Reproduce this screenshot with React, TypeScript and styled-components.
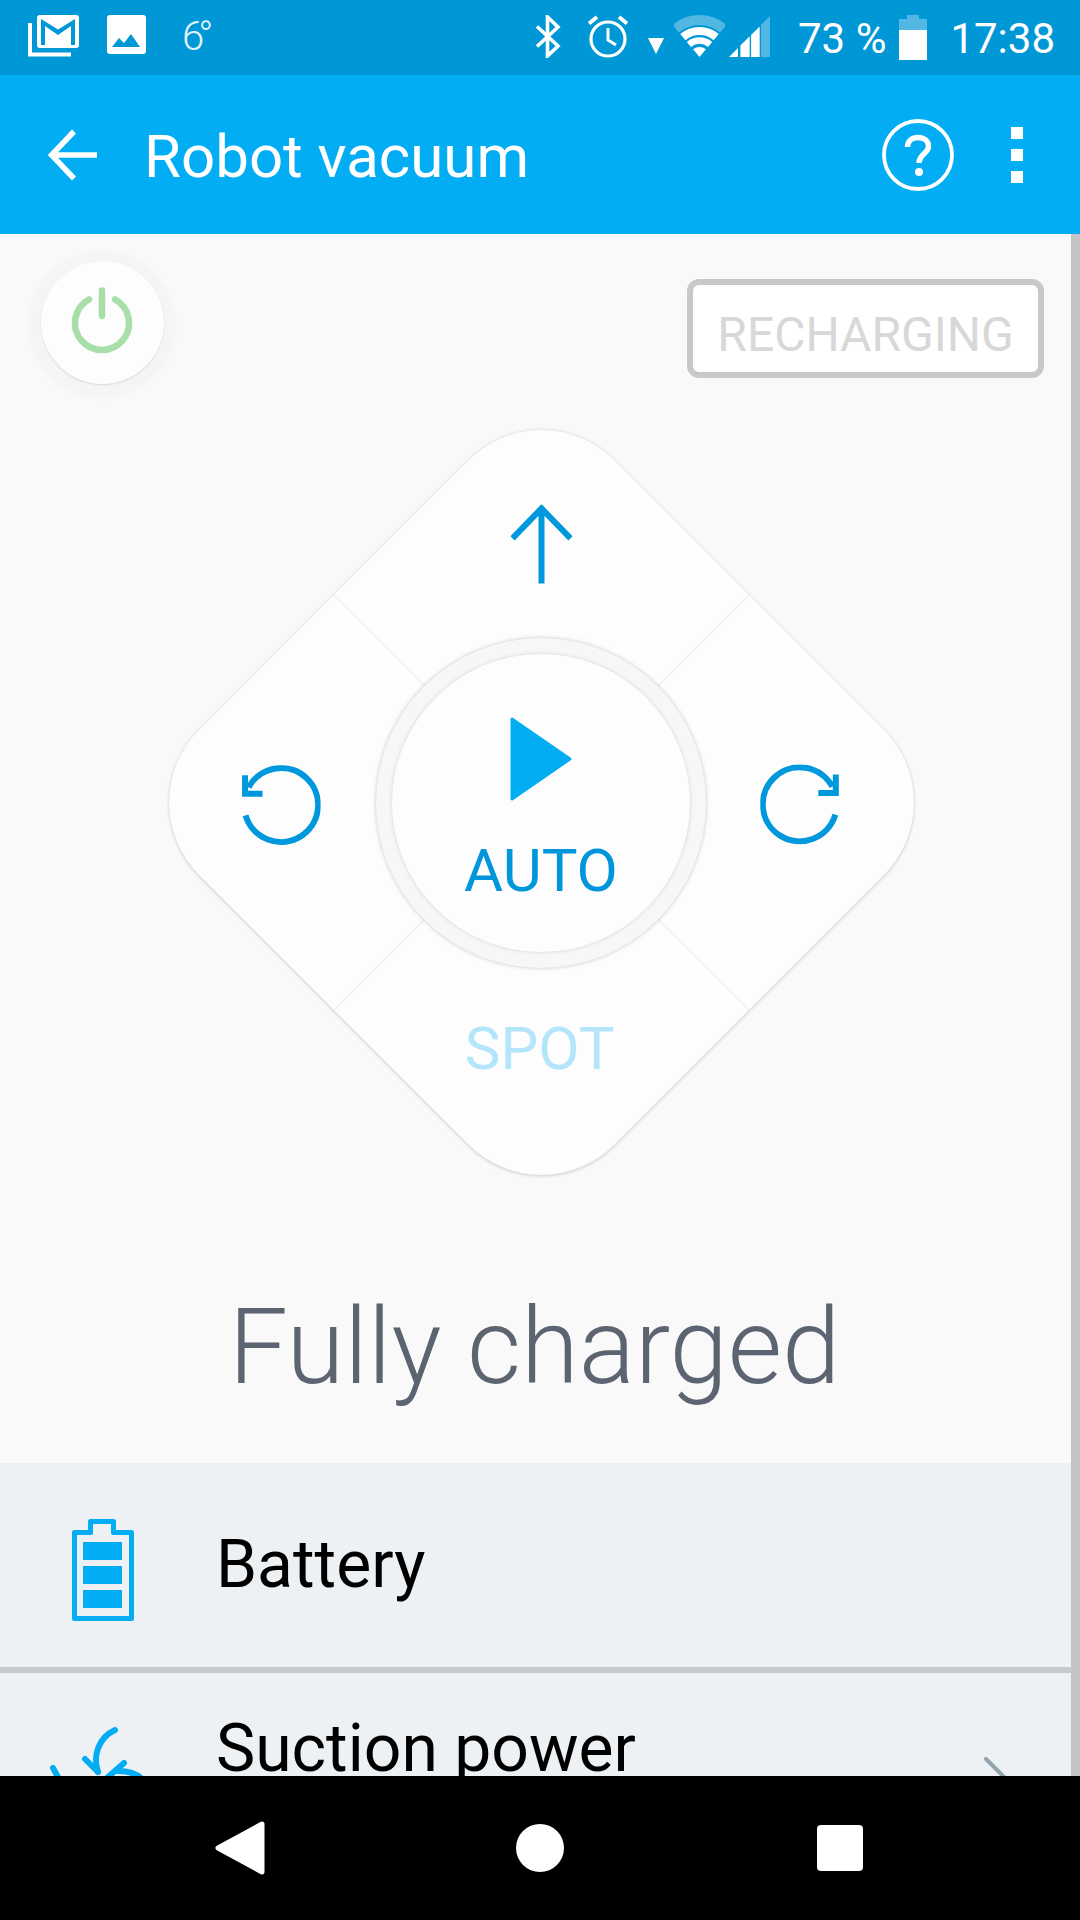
import { createGlobalStyle, styled } from 'styled-components';

const GlobalStyle = createGlobalStyle`
  html, body {
    margin: 0;
    padding: 0;
    background: #f9f9f9;
  }
  body {
    font-family: Roboto, 'Liberation Sans', sans-serif;
  }
`;

const App = () => {
  return (
    <>
      <GlobalStyle />
      <Screen>
        <StatusBar>
          <StatusGroup>
            <StatusSlot $left={0} $top={-1}>
              <GmailIcon />
            </StatusSlot>
            <StatusSlot $left={26}>
              <PictureIcon />
            </StatusSlot>
            <Weather>6°</Weather>
          </StatusGroup>
          <StatusGroup>
            <StatusSlot $left={0}>
              <BluetoothIcon />
            </StatusSlot>
            <StatusSlot $left={26}>
              <AlarmIcon />
            </StatusSlot>
            <StatusSlot $left={19} $top={23}>
              <DataIcon />
            </StatusSlot>
            <StatusSlot $left={10}>
              <WifiIcon />
            </StatusSlot>
            <StatusSlot $left={4}>
              <SignalIcon />
            </StatusSlot>
            <Percent>73 %</Percent>
            <StatusSlot $left={13}>
              <PhoneBatteryIcon />
            </StatusSlot>
            <Clock>17:38</Clock>
          </StatusGroup>
        </StatusBar>
        <AppBar>
          <BackIcon />
          <Title>Robot vacuum</Title>
          <HelpIcon />
          <Dots>
            <Dot />
            <Dot />
            <Dot />
          </Dots>
        </AppBar>
        <Body>
          <TopRow>
            <PowerHalo>
              <PowerButton>
                <PowerIcon />
              </PowerButton>
            </PowerHalo>
            <Recharge>RECHARGING</Recharge>
          </TopRow>
          <PadArea>
            <Diamond>
              <Sector $place="top">
                <Upright>
                  <UpArrow />
                </Upright>
              </Sector>
              <Sector $place="right">
                <Upright>
                  <RotateIcon $flip />
                </Upright>
              </Sector>
              <Sector $place="left">
                <Upright>
                  <RotateIcon />
                </Upright>
              </Sector>
              <Sector $place="bottom">
                <Upright>
                  <SpotLabel>SPOT</SpotLabel>
                </Upright>
              </Sector>
            </Diamond>
            <HubRing>
              <Hub>
                <PlayIcon />
                <AutoLabel>AUTO</AutoLabel>
              </Hub>
            </HubRing>
          </PadArea>
          <Status>Fully charged</Status>
          <Row>
            <RowIcon $inset={72} $top={10}>
              <BatteryIcon />
            </RowIcon>
            <RowLabel>Battery</RowLabel>
          </Row>
          <Divider />
          <Row $tall>
            <RowIcon $inset={30} $top={8}>
              <SuctionIcon />
            </RowIcon>
            <RowLabel>Suction power</RowLabel>
            <Chevron />
          </Row>
          <Scrollbar />
        </Body>
        <NavBar>
          <NavCell>
            <NavBack />
          </NavCell>
          <NavCell>
            <NavHome />
          </NavCell>
          <NavCell>
            <NavSquare />
          </NavCell>
        </NavBar>
      </Screen>
    </>
  );
};

export default App;

const GmailIcon = () => (
  <svg width="54" height="44" viewBox="0 0 54 44">
    <path d="M3 9V40.5H44" fill="none" stroke="#fff" strokeWidth="4" />
    <rect x="10" y="1" width="42" height="33" rx="3" fill="#fff" />
    <path d="M14 5L31 15.5L48 5V31H44V12L31 21L18 12V31H14Z" fill="#0097d6" />
  </svg>
);

const PictureIcon = () => (
  <svg width="39" height="39" viewBox="0 0 39 39">
    <rect width="39" height="39" rx="3" fill="#fff" />
    <path d="M5 32L12 23L17 28L24 19L33 32Z" fill="#0097d6" />
  </svg>
);

const BluetoothIcon = () => (
  <svg width="26" height="43" viewBox="0 0 26 43">
    <path d="M2 11.5L23 31L12.5 41V2L23 12L2 31.5" fill="none" stroke="#fff" strokeWidth="3.6" />
  </svg>
);

const AlarmIcon = () => (
  <svg width="42" height="43" viewBox="0 0 42 43">
    <circle cx="21" cy="24" r="17" fill="none" stroke="#fff" strokeWidth="3.2" />
    <path d="M21 13V25L29 30" fill="none" stroke="#fff" strokeWidth="3" />
    <path d="M10 2L2 8.5M32 2L40 8.5" fill="none" stroke="#fff" strokeWidth="4" />
  </svg>
);

const DataIcon = () => (
  <svg width="16" height="16" viewBox="0 0 16 16">
    <path d="M0 0H16L8 16Z" fill="#fff" />
  </svg>
);

const WifiIcon = () => (
  <svg width="51" height="43" viewBox="0 0 51 43">
    <path d="M1.7 13.7A37 37 0 0 1 49.3 13.7" fill="none" stroke="#fff" strokeOpacity="0.32" strokeWidth="10" />
    <path d="M8.8 22.1A26 26 0 0 1 42.2 22.1" fill="none" stroke="#fff" strokeWidth="8" />
    <path d="M14.9 29.4A16.5 16.5 0 0 1 36.1 29.4" fill="none" stroke="#fff" strokeWidth="6.5" />
    <path d="M25.5 42L19.1 34.3A10 10 0 0 1 31.9 34.3Z" fill="#fff" />
  </svg>
);

const SignalIcon = () => (
  <svg width="41" height="43" viewBox="0 0 41 43">
    <path d="M0 42L9 33V42Z" fill="#fff" />
    <path d="M11.4 30.5L20.7 21.3V42H11.4Z" fill="#fff" />
    <path d="M22.1 20L30.7 11.4V42H22.1Z" fill="#fff" />
    <path d="M32 10L41 1V42H32Z" fill="#fff" fillOpacity="0.32" />
  </svg>
);

const PhoneBatteryIcon = () => (
  <svg width="28" height="45" viewBox="0 0 28 45">
    <path d="M8 0H20V4H28V15H0V4H8Z" fill="#fff" fillOpacity="0.32" />
    <rect y="15" width="28" height="30" fill="#fff" />
  </svg>
);

const BackIcon = () => (
  <svg width="50" height="52" viewBox="0 0 50 52">
    <path d="M26 2.5L3.5 26L26 49.5M3.5 26H49" fill="none" stroke="#fff" strokeWidth="5.5" />
  </svg>
);

const HelpIcon = () => (
  <svg width="72" height="72" viewBox="0 0 72 72">
    <circle cx="36" cy="36" r="34" fill="none" stroke="#fff" strokeWidth="3.8" />
    <path
      d="M25.5 28C25.5 22 30 18.5 36 18.5C42 18.5 46.5 22 46.5 27.5C46.5 34 37 35.5 37 44"
      fill="none"
      stroke="#fff"
      strokeWidth="5.5"
    />
    <circle cx="37" cy="53" r="4" fill="#fff" />
  </svg>
);

const PowerIcon = () => (
  <svg width="62" height="67" viewBox="0 0 62 67">
    <path
      d="M18 12.3A27 27 0 1 0 44 12.3"
      fill="none"
      stroke="#a8dfa9"
      strokeWidth="6.5"
      strokeLinecap="round"
    />
    <path d="M31 3.5V29" fill="none" stroke="#a8dfa9" strokeWidth="6.5" strokeLinecap="round" />
  </svg>
);

const UpArrow = () => (
  <svg width="62" height="80" viewBox="0 0 62 80">
    <path d="M2 34L31 4L60 34M31 4V79" fill="none" stroke="#0098dc" strokeWidth="6" />
  </svg>
);

const RotateIcon = ({ $flip }: { $flip?: boolean }) => (
  <RotateSvg $flip={$flip} width="80" height="80" viewBox="0 0 80 80">
    <path d="M8 22A37 37 0 1 1 5 50" fill="none" stroke="#0098dc" strokeWidth="6" />
    <path d="M4.5 10V28.5H22" fill="none" stroke="#0098dc" strokeWidth="6" />
  </RotateSvg>
);

const PlayIcon = () => (
  <svg width="62" height="84" viewBox="0 0 62 84">
    <path d="M2 2L60 42L2 82Z" fill="#03adf2" stroke="#03adf2" strokeWidth="3" strokeLinejoin="round" />
  </svg>
);

const BatteryIcon = () => (
  <svg width="62" height="102" viewBox="0 0 62 102">
    <path
      d="M2.5 13.5H18.5V2.5H41.5V13.5H59.5V99.5H2.5Z"
      fill="none"
      stroke="#03adf3"
      strokeWidth="5"
      strokeLinejoin="round"
    />
    <rect x="11" y="23" width="39" height="18" fill="#03adf3" />
    <rect x="11" y="47" width="39" height="18" fill="#03adf3" />
    <rect x="11" y="71" width="39" height="18" fill="#03adf3" />
  </svg>
);

const SuctionIcon = () => (
  <svg width="130" height="110" viewBox="0 0 130 110">
    <g fill="none" stroke="#03adf3" strokeWidth="6" strokeLinecap="round">
      <path d="M85 11C70 18 62 35 68 53" />
      <path d="M55 40L68 53" />
      <path d="M94 44L78 58" />
      <path d="M88 52C98 52 107 55 112 60" />
      <path d="M23 49L29 60" />
    </g>
  </svg>
);

const Chevron = () => (
  <ChevronSvg width="24" height="60" viewBox="0 0 24 60">
    <path d="M2 2L22 22L2 42" fill="none" stroke="#90a4ae" strokeWidth="4" strokeLinecap="round" />
  </ChevronSvg>
);

const NavBack = () => (
  <svg width="54" height="58" viewBox="0 0 54 58">
    <path d="M49 5L5 29L49 53Z" fill="#fff" stroke="#fff" strokeWidth="5" strokeLinejoin="round" />
  </svg>
);

const Screen = styled.div`
  display: flex;
  flex-direction: column;
  width: 1080px;
  height: 1920px;
  overflow: hidden;
  background: #f9f9f9;
`;

const StatusBar = styled.div`
  display: flex;
  flex-shrink: 0;
  justify-content: space-between;
  align-items: flex-start;
  height: 75px;
  padding: 15px 25px 0 27px;
  box-sizing: border-box;
  background: #0097d6;
  color: #fff;
`;

const StatusGroup = styled.div`
  display: flex;
  align-items: flex-start;
`;

const StatusSlot = styled.div<{ $left: number; $top?: number }>`
  display: flex;
  margin-top: ${({ $top }) => $top ?? 0}px;
  margin-left: ${({ $left }) => $left}px;
`;

const Weather = styled.div`
  margin-left: 36px;
  font-size: 40px;
  font-weight: 300;
  line-height: 44px;
  letter-spacing: -6px;
  color: #e3f4fb;
`;

const Percent = styled.div`
  margin-left: 28px;
  font-size: 42px;
  line-height: 48px;
  white-space: nowrap;
`;

const Clock = styled.div`
  margin-left: 23px;
  font-size: 42px;
  line-height: 48px;
`;

const AppBar = styled.div`
  display: flex;
  flex-shrink: 0;
  align-items: center;
  height: 159px;
  padding: 0 57px 0 48px;
  box-sizing: border-box;
  background: #03adf3;
  color: #fff;
`;

const Title = styled.div`
  flex: 1;
  margin: 4px 0 0 46px;
  font-size: 60px;
`;

const Dots = styled.div`
  display: flex;
  flex-direction: column;
  gap: 10px;
  margin-left: 57px;
`;

const Dot = styled.div`
  width: 12px;
  height: 12px;
  background: #fff;
`;

const Body = styled.div`
  position: relative;
  flex: 1;
  min-height: 0;
  overflow: hidden;
`;

const TopRow = styled.div`
  display: flex;
  justify-content: space-between;
  align-items: flex-start;
  padding: 17px 36px 0 29px;
`;

const PowerHalo = styled.div`
  display: flex;
  justify-content: center;
  align-items: center;
  width: 146px;
  height: 146px;
  border-radius: 50%;
  background: #f5f5f5;
  box-shadow: 0 1px 6px rgba(0, 0, 0, 0.02);
`;

const PowerButton = styled.div`
  display: flex;
  justify-content: center;
  align-items: center;
  width: 123px;
  height: 123px;
  margin-bottom: 4px;
  padding-bottom: 4px;
  box-sizing: border-box;
  border-radius: 50%;
  background: #fdfdfd;
  box-shadow: 0 1px 2px rgba(0, 0, 0, 0.12);
`;

const Recharge = styled.div`
  display: flex;
  justify-content: center;
  align-items: center;
  width: 357px;
  height: 99px;
  margin-top: 28px;
  padding-top: 12px;
  box-sizing: border-box;
  border: 6px solid #c8c8c8;
  border-radius: 12px;
  background: #fff;
  color: #d8d8d8;
  font-size: 48px;
`;

const PadArea = styled.div`
  position: relative;
  display: flex;
  justify-content: center;
  align-items: center;
  height: 747px;
  margin: 32px 0 -1px 2px;
`;

const Diamond = styled.div`
  display: grid;
  grid-template-columns: 1fr 1fr;
  grid-template-rows: 1fr 1fr;
  width: 587px;
  height: 587px;
  flex-shrink: 0;
  overflow: hidden;
  border-radius: 103px;
  background: #fdfdfd;
  box-shadow: 1.5px 1.5px 3px rgba(0, 0, 0, 0.07), 0 0 4px rgba(0, 0, 0, 0.14);
  transform: rotate(45deg);
`;

const sectorPadding = {
  top: '0 70px 70px 0',
  right: '2px 0 70px 76px',
  left: '80px 70px 0 0',
  bottom: '56px 0 0 51px',
};

const sectorBorder = {
  top: 'border-right: 1px solid #ececec; border-bottom: 1px solid #ececec;',
  right: 'border-bottom: 1px solid #ececec;',
  left: 'border-right: 1px solid #ececec;',
  bottom: '',
};

const Sector = styled.div<{ $place: 'top' | 'right' | 'left' | 'bottom' }>`
  display: flex;
  justify-content: center;
  align-items: center;
  padding: ${({ $place }) => sectorPadding[$place]};
  ${({ $place }) => sectorBorder[$place]}
  box-sizing: border-box;
`;

const Upright = styled.div`
  display: flex;
  transform: rotate(-45deg);
`;

const RotateSvg = styled.svg<{ $flip?: boolean }>`
  transform: ${({ $flip }) => ($flip ? 'scaleX(-1)' : 'none')};
`;

const SpotLabel = styled.div`
  color: #b3e5fb;
  font-size: 60px;
`;

const HubRing = styled.div`
  position: absolute;
  top: 50%;
  left: 50%;
  display: flex;
  justify-content: center;
  align-items: center;
  width: 330px;
  height: 330px;
  border-radius: 50%;
  background: #f7f7f7;
  box-shadow: 0 0 4px rgba(0, 0, 0, 0.22);
  transform: translate(-50%, -50%);
`;

const Hub = styled.div`
  display: flex;
  flex-direction: column;
  align-items: center;
  width: 298px;
  height: 298px;
  padding-top: 63px;
  box-sizing: border-box;
  border-radius: 50%;
  background: #fdfdfd;
  box-shadow: 0 0 4px rgba(0, 0, 0, 0.14);
`;

const AutoLabel = styled.div`
  margin-top: 36px;
  color: #0096db;
  font-size: 60px;
  line-height: 68px;
`;

const Status = styled.div`
  display: flex;
  justify-content: center;
  align-items: center;
  height: 288px;
  padding: 56px 11px 0 0;
  box-sizing: border-box;
  color: #5b6470;
  font-size: 105px;
  font-weight: 300;
`;

const Row = styled.div<{ $tall?: boolean }>`
  display: flex;
  align-items: ${({ $tall }) => ($tall ? 'flex-start' : 'center')};
  height: 204px;
  padding-top: ${({ $tall }) => ($tall ? '38px' : '0')};
  box-sizing: border-box;
  background: #eef1f4;
`;

const RowIcon = styled.div<{ $inset: number; $top: number }>`
  display: flex;
  flex-shrink: 0;
  width: 216px;
  margin-top: ${({ $top }) => $top}px;
  padding-left: ${({ $inset }) => $inset}px;
  box-sizing: border-box;
`;

const RowLabel = styled.div`
  color: #000;
  font-size: 66px;
  line-height: 76px;
`;

const Divider = styled.div`
  height: 6px;
  background: #c8c9cb;
`;

const ChevronSvg = styled.svg`
  margin: 46px 72px 0 auto;
`;

const Scrollbar = styled.div`
  position: absolute;
  top: 0;
  right: 0;
  bottom: 0;
  width: 9px;
  background: #c4c4c4;
`;

const NavBar = styled.div`
  display: grid;
  grid-template-columns: repeat(3, 300px);
  flex-shrink: 0;
  align-items: center;
  justify-content: center;
  height: 144px;
  background: #000;
`;

const NavCell = styled.div`
  display: flex;
  justify-content: center;
`;

const NavHome = styled.div`
  width: 48px;
  height: 48px;
  border-radius: 50%;
  background: #fff;
`;

const NavSquare = styled.div`
  width: 46px;
  height: 46px;
  border-radius: 4px;
  background: #fff;
`;
